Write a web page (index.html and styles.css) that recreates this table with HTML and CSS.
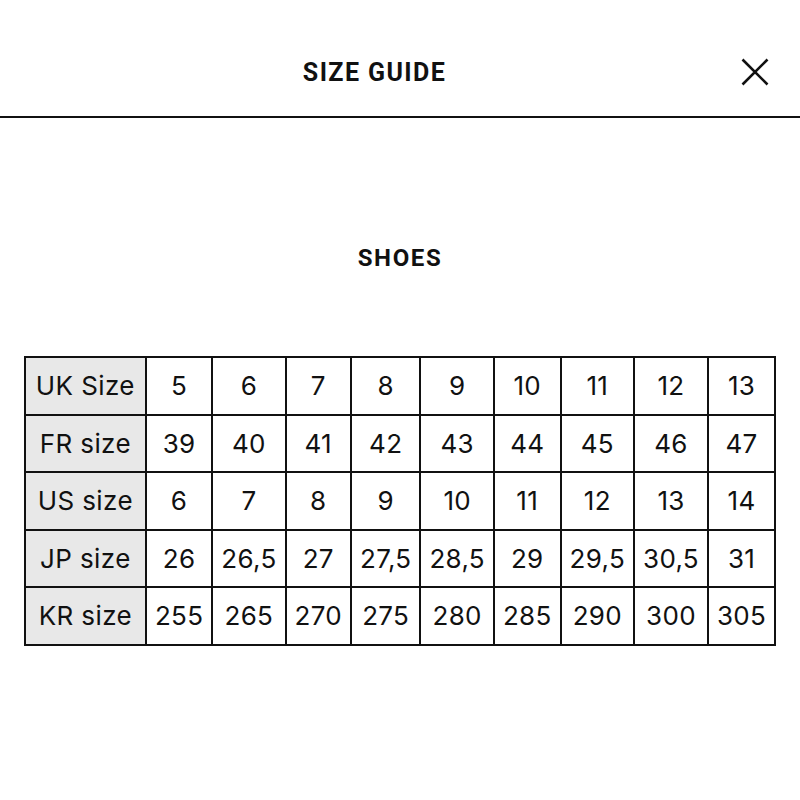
FILE: index.html
```html
<!DOCTYPE html>
<html lang="en">
<head>
<meta charset="utf-8">
<title>Size Guide</title>
<link rel="stylesheet" href="styles.css">
</head>
<body>
<header class="header">
  <h1 class="title">SIZE GUIDE</h1>
  <button class="close" aria-label="Close">
    <svg width="28" height="28" viewBox="0 0 28 28"><path d="M1.5 1.5 L26.5 26.5 M26.5 1.5 L1.5 26.5" stroke="#111" stroke-width="2.6" fill="none"/></svg>
  </button>
</header>
<main class="content">
  <h2 class="section">SHOES</h2>
  <table class="sizes">
    <tr><th>UK Size</th><td>5</td><td>6</td><td>7</td><td>8</td><td>9</td><td>10</td><td>11</td><td>12</td><td>13</td></tr>
    <tr><th>FR size</th><td>39</td><td>40</td><td>41</td><td>42</td><td>43</td><td>44</td><td>45</td><td>46</td><td>47</td></tr>
    <tr><th>US size</th><td>6</td><td>7</td><td>8</td><td>9</td><td>10</td><td>11</td><td>12</td><td>13</td><td>14</td></tr>
    <tr><th>JP size</th><td>26</td><td>26,5</td><td>27</td><td>27,5</td><td>28,5</td><td>29</td><td>29,5</td><td>30,5</td><td>31</td></tr>
    <tr><th>KR size</th><td>255</td><td>265</td><td>270</td><td>275</td><td>280</td><td>285</td><td>290</td><td>300</td><td>305</td></tr>
  </table>
</main>
</body>
</html>
```
FILE: styles.css
```css
html, body {
  margin: 0;
  padding: 0;
  background: #fff;
  color: #111;
  font-family: Inter, "Liberation Sans", sans-serif;
}
.header {
  display: flex;
  align-items: center;
  height: 88px;
  padding-top: 28px;
  border-bottom: 2px solid #111;
}
.title {
  flex: 1;
  margin: 0;
  padding-left: 8px;
  text-align: center;
  font-family: Roboto, "Liberation Sans", sans-serif;
  font-weight: 700;
  font-size: 25px;
  letter-spacing: 1.4px;
}
.close {
  margin-right: 31px;
  background: none;
  border: 0;
  padding: 0;
  width: 28px;
  height: 28px;
  display: flex;
}
.content {
  display: flex;
  flex-direction: column;
  align-items: center;
}
.section {
  margin: 124px 0 0;
  font-family: Roboto, "Liberation Sans", sans-serif;
  font-weight: 700;
  font-size: 24px;
  letter-spacing: 1.6px;
  line-height: 32px;
}
.sizes {
  margin-top: 82px;
  border-collapse: collapse;
  font-size: 26px;
}
.sizes th, .sizes td {
  border: 2px solid #111;
  height: 55.5px;
  padding: 0 8px;
  text-align: center;
  font-weight: 400;
  white-space: nowrap;
  letter-spacing: 0.3px;
}
.sizes th {
  background: #e8e8e8;
  padding: 0 10px;
  letter-spacing: 0.4px;
}
```
